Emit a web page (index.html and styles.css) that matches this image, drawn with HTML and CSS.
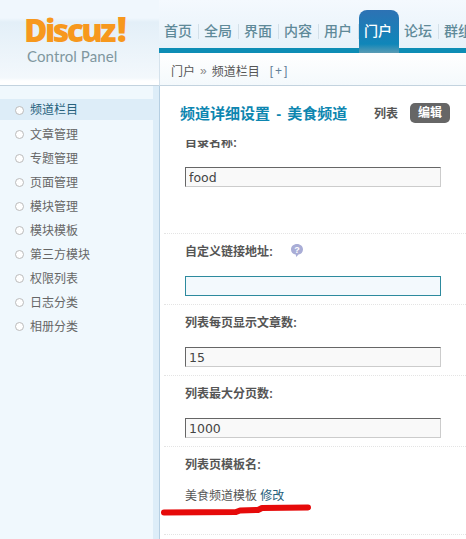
FILE: index.html
```html
<!DOCTYPE html>
<html>
<head>
  <meta charset="utf-8">
  <link rel="stylesheet" href="styles.css">
</head>
<body>
  <div class="page">
    <div class="header">
      <div class="logo">
        <div class="logo-name">Discuz<span class="logo-mark">!</span></div>
        <div class="logo-sub">Control Panel</div>
      </div>
      <div class="header-right">
        <div class="nav">
          <a class="nav-item">首页</a>
          <a class="nav-item">全局</a>
          <a class="nav-item">界面</a>
          <a class="nav-item">内容</a>
          <a class="nav-item">用户</a>
          <a class="nav-item active">门户</a>
          <a class="nav-item">论坛</a>
          <a class="nav-item">群组</a>
        </div>
        <div class="crumb">
          <span>门户</span><span class="crumb-sep">»</span><span>频道栏目</span><span class="crumb-add">[+]</span>
        </div>
      </div>
    </div>

    <div class="body">
      <div class="side">
        <ul class="menu">
          <li class="menu-item active">频道栏目</li>
          <li class="menu-item">文章管理</li>
          <li class="menu-item">专题管理</li>
          <li class="menu-item">页面管理</li>
          <li class="menu-item">模块管理</li>
          <li class="menu-item">模块模板</li>
          <li class="menu-item">第三方模块</li>
          <li class="menu-item">权限列表</li>
          <li class="menu-item">日志分类</li>
          <li class="menu-item">相册分类</li>
        </ul>
      </div>
      <div class="main">
        <div class="title-row">
          <h1>频道详细设置 - 美食频道</h1>
          <span class="tab">列表</span>
          <span class="tab current">编辑</span>
        </div>
        <div class="form-wrap">
          <div class="form">
            <div class="row row-first">
              <label>目录名称:</label>
              <input class="txt" type="text" value="food">
            </div>
            <div class="row">
              <label>自定义链接地址:
                <svg class="help" width="14" height="15" viewBox="0 0 14 15">
                  <path d="M7 1c3.400 0 6 2.300 6 5.400 0 2.600-1.900 4.700-4.500 5.200L6.200 14l-.5-2.400C3 11.100 1 9.100 1 6.400 1 3.300 3.600 1 7 1z" fill="#a9add6"/>
                  <text x="7" y="9.500" text-anchor="middle" class="help-q">?</text>
                </svg>
              </label>
              <input class="txt focus" type="text">
            </div>
            <div class="row">
              <label>列表每页显示文章数:</label>
              <input class="txt" type="text" value="15">
            </div>
            <div class="row">
              <label>列表最大分页数:</label>
              <input class="txt" type="text" value="1000">
            </div>
            <div class="row row-last">
              <label>列表页模板名:</label>
              <div class="tpl">美食频道模板 <a>修改</a></div>
            </div>
          </div>
        </div>
      </div>
    </div>

    <svg class="scribble" width="160" height="20" viewBox="0 0 160 20">
      <path d="M6 13.500 L78 13 L82 11.500 L100 11 L104 9 L150 8.500" fill="none" stroke="#e60a0a" stroke-width="6" stroke-linecap="round" stroke-linejoin="round"/>
    </svg>
  </div>
</body>
</html>
```

FILE: styles.css
```css
* {
  box-sizing: border-box;
}

html, body {
  margin: 0;
  height: 100%;
  overflow: hidden;
}

body {
  font-family: "Liberation Sans", "Noto Sans CJK SC", sans-serif;
  font-size: 12px;
  color: #555;
  background: #fff;
}

.page {
  position: relative;
  width: 466px;
  height: 539px;
  overflow: hidden;
}

.header {
  display: flex;
  height: 86px;
  background: linear-gradient(#f4f9fe, #e6f1f9 53px);
}

.logo {
  width: 159px;
  height: 86px;
  padding: 12px 0 0 24px;
  background: linear-gradient(#f0f7fd 18px, #e3eff8 22px, #f3f8fc 78px, #fff 81px);
  border-bottom: 1px solid #c3d3df;
}

.logo-name {
  font-family: "Open Sans", sans-serif;
  font-size: 32px;
  font-weight: 800;
  line-height: 34px;
  letter-spacing: -2.6px;
  color: #f7981d;
}

.logo-mark {
  margin-left: 3px;
  font-size: 35px;
}

.logo-sub {
  margin: 0 0 0 3px;
  font-family: "Lato", sans-serif;
  font-size: 15px;
  line-height: 18px;
  letter-spacing: .1px;
  color: #7f979f;
}

.header-right {
  flex: 1;
  display: flex;
  flex-direction: column;
  min-width: 0;
}

.nav {
  display: flex;
  align-items: flex-end;
  flex: none;
  height: 53px;
  border-bottom: 5px solid #0d8db5;
  white-space: nowrap;
}

.nav-item {
  flex: none;
  position: relative;
  width: 40px;
  height: 33px;
  padding-right: 2px;
  font-size: 14px;
  font-weight: 500;
  line-height: 32px;
  text-align: center;
  color: #5f8a99;
}

.nav-item::after {
  content: "";
  position: absolute;
  right: 0;
  top: 9px;
  height: 15px;
  border-right: 1px solid #d3e0e9;
}

.nav-item.active {
  height: 43px;
  margin-bottom: -5px;
  padding-top: 5px;
  border-radius: 8px 8px 0 0;
  color: #fff;
  background: linear-gradient(#2d72b4, #0f86b9 34px, #5b9cb4);
}

.nav-item.active::after {
  display: none;
}

.crumb {
  flex: 1;
  display: flex;
  align-items: center;
  gap: 5px;
  padding: 3px 0 0 11px;
  background: linear-gradient(#fff, #f4f9fc);
  border-left: 1px solid #d5e2ec;
  border-bottom: 1px solid #c3d3df;
  color: #555;
}

.crumb-sep {
  color: #888;
}

.crumb-add {
  margin-left: 5px;
  letter-spacing: 2px;
  color: #5f7f99;
}

.body {
  display: flex;
  height: 453px;
}

.side {
  flex: none;
  width: 159px;
  padding-top: 13px;
  background: #f0f8fd;
  border-right: 6px solid #ddedf8;
}

.menu {
  margin: 0;
  padding: 0;
  list-style: none;
}

.menu-item {
  position: relative;
  height: 24px;
  padding-left: 30px;
  line-height: 25px;
  color: #666;
}

.menu-item::before {
  content: "";
  position: absolute;
  left: 15px;
  top: 7px;
  width: 7px;
  height: 7px;
  background: #fff;
  border: 1px solid #bbb;
  border-radius: 50%;
}

.menu-item.active {
  height: 21px;
  margin-bottom: 3px;
  line-height: 23px;
  color: #27617c;
  background: #ddedf8;
}

.main {
  flex: 1;
  display: flex;
  flex-direction: column;
  min-width: 0;
  background: #fff;
  border-left: 1px solid #b6cfe2;
}

.title-row {
  display: flex;
  align-items: center;
  flex: none;
  height: 54px;
  padding: 0 16px 1px 20px;
}

h1 {
  flex: 1;
  margin: 0;
  font-size: 15px;
  font-weight: 700;
  word-spacing: 2px;
  color: #0d86b0;
}

.tab {
  font-weight: 700;
  color: #555;
}

.tab.current {
  width: 40px;
  height: 20px;
  margin-left: 12px;
  line-height: 20px;
  text-align: center;
  color: #fff;
  background: #666;
  border-radius: 5px;
}

.form-wrap {
  flex: 1;
  overflow: hidden;
}

.form {
  margin-top: -8px;
  padding-left: 4px;
}

.row {
  height: 71px;
  padding: 7px 0 0 21px;
  border-bottom: 1px dotted #e4e4e4;
}

.row-first {
  height: 102px;
  padding-top: 0;
}

.row-last {
  height: 88px;
}

label {
  display: flex;
  align-items: center;
  gap: 17px;
  height: 18px;
  margin-bottom: 17px;
  font-weight: 700;
  color: #555;
}

.help {
  flex: none;
}

.help-q {
  font-size: 9px;
  font-weight: 700;
  fill: #fff;
}

.txt {
  display: block;
  width: 256px;
  height: 20px;
  padding: 0 3px;
  font-family: "DejaVu Sans", sans-serif;
  font-size: 12.5px;
  color: #444;
  background: #f9f9f9;
  border: 1px solid;
  border-color: #666 #ccc #ccc #666;
  outline: none;
}

.txt.focus {
  background: #f3f9fd;
  border-color: #2d8a9e;
}

.tpl {
  margin-top: -3px;
  color: #555;
}

.tpl a {
  color: #27617c;
}

.scribble {
  position: absolute;
  left: 158px;
  top: 499px;
}
```
